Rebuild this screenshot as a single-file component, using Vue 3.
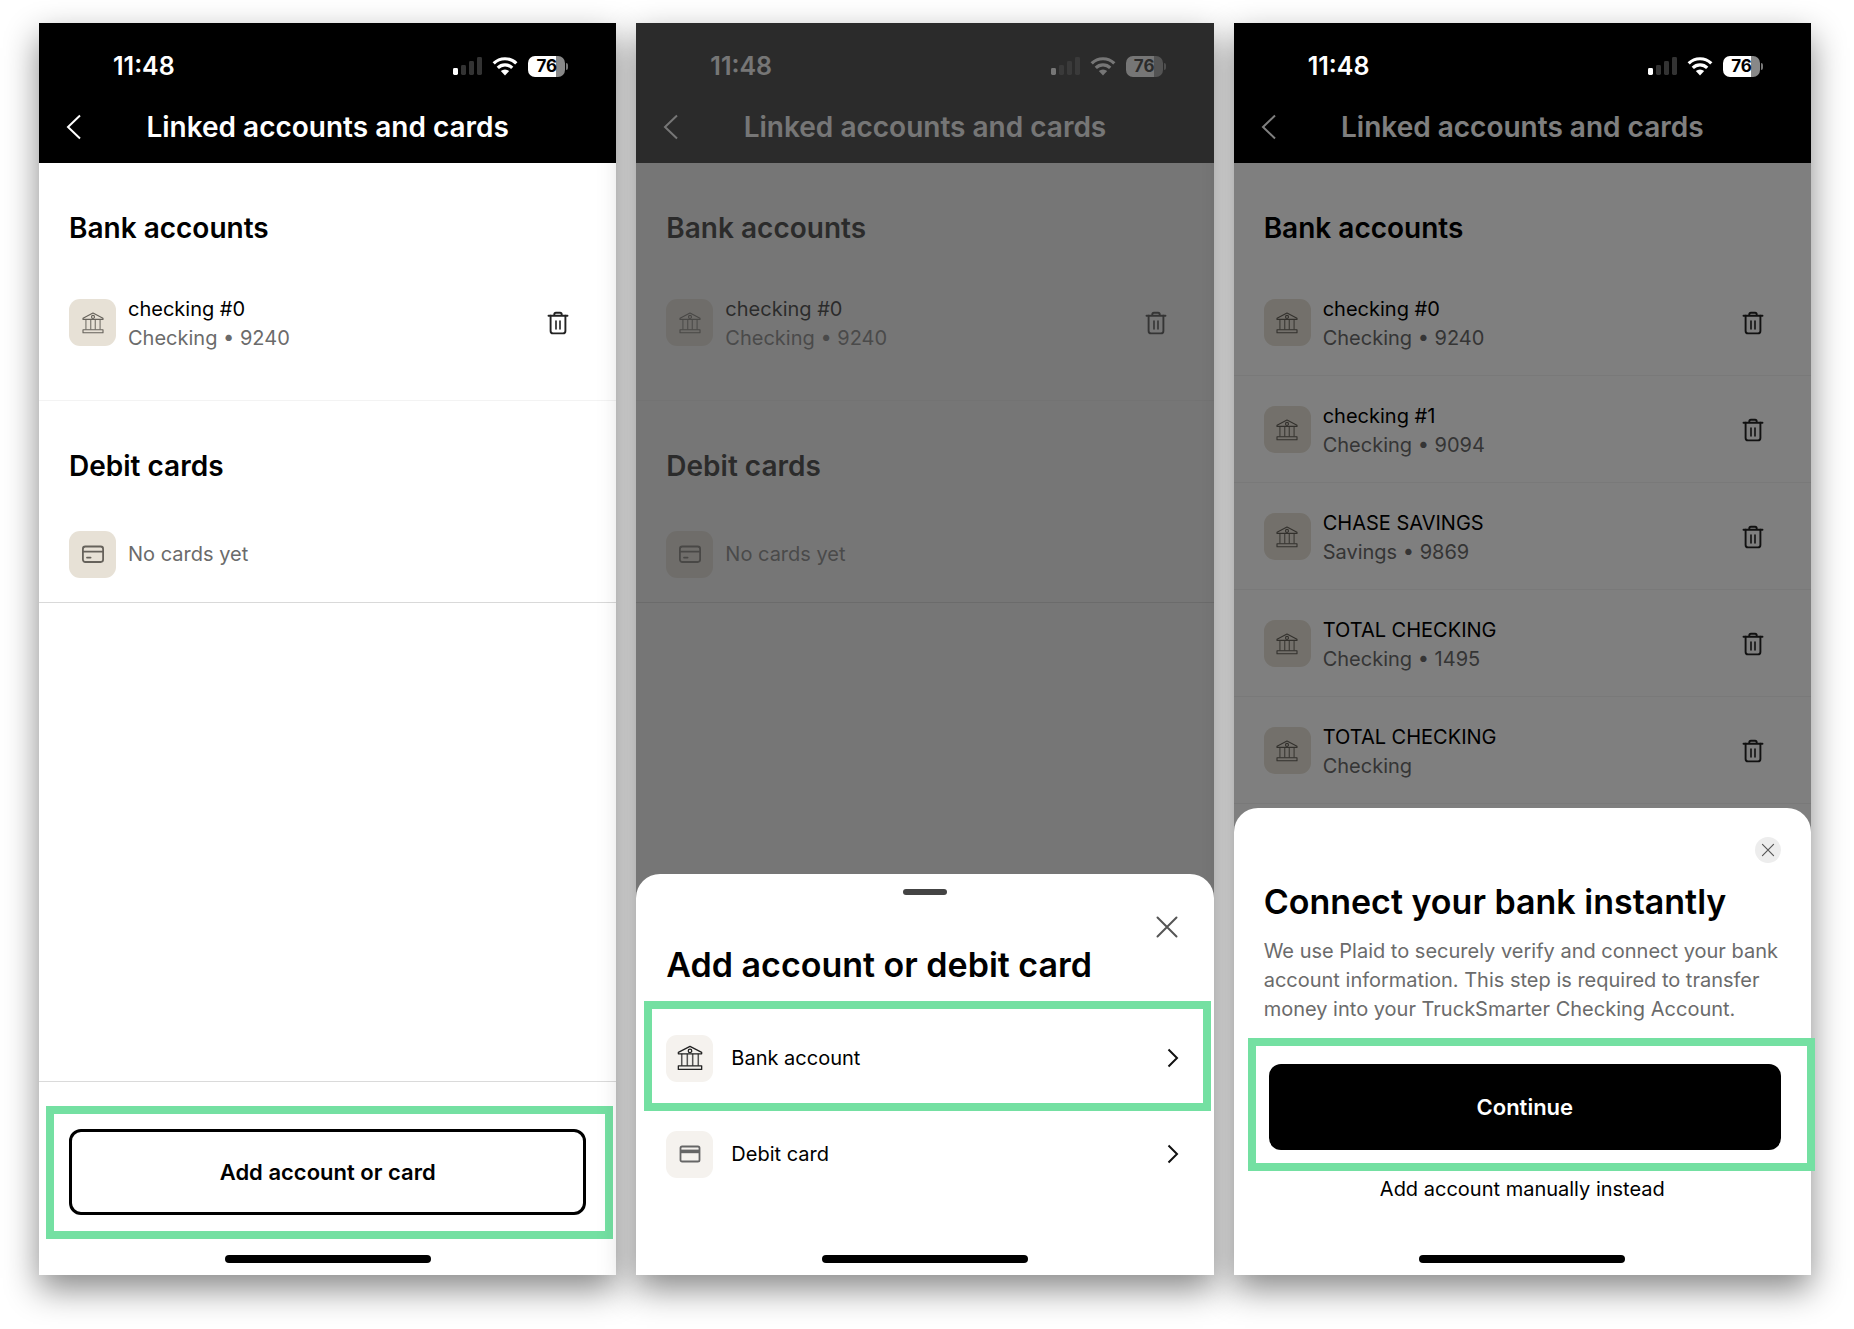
<script setup>
const checking0 = { name: 'checking #0', detail: 'Checking • 9240' }

const phones = [
  { id: 'list', accounts: [checking0], cards: true, sheet: null },
  { id: 'add', accounts: [checking0], cards: true, sheet: 'add' },
  {
    id: 'connect',
    accounts: [
      checking0,
      { name: 'checking #1', detail: 'Checking • 9094' },
      { name: 'CHASE SAVINGS', detail: 'Savings • 9869' },
      { name: 'TOTAL CHECKING', detail: 'Checking • 1495' },
      { name: 'TOTAL CHECKING', detail: 'Checking' },
    ],
    cards: false,
    sheet: 'connect',
  },
]
</script>

<template>
  <svg class="symbols" aria-hidden="true">
    <symbol id="i-bank" viewBox="0 0 24 24">
      <g fill="none" stroke="currentColor" stroke-linejoin="round">
        <path d="M2 8.400V7.200L12 2l10 5.200v1.200z" stroke-width="1.100" />
        <circle cx="12" cy="5.900" r="1.500" stroke-width="1.100" />
        <path d="M4.900 8.400v10.200M9.700 8.400v10.200M14.300 8.400v10.200M19.100 8.400v10.200" stroke-width="1.300" stroke-opacity="0.75" />
        <path d="M2 18.700h20v3.100H2z" stroke-width="1.100" />
      </g>
    </symbol>
    <symbol id="i-trash" viewBox="0 0 24 24">
      <g fill="none" stroke="currentColor" stroke-width="1.900" stroke-linecap="round" stroke-linejoin="round">
        <path d="M2.500 4.800h19M8.300 4.600V3.400q0-1.600 1.600-1.600h4.200q1.600 0 1.600 1.600V4.600" />
        <path d="M4.600 4.800v15.200q0 2.400 2.400 2.400h10q2.400 0 2.400-2.400V4.800" />
        <path d="M10 10v8M14 10v8" stroke-width="1.600" />
      </g>
    </symbol>
    <symbol id="i-card" viewBox="0 0 24 24">
      <g fill="none" stroke="currentColor" stroke-width="1.800" stroke-linecap="round">
        <rect x="1.900" y="3.500" width="20.200" height="15.500" rx="2.400" />
        <path d="M2 8.600h20M6 14.600h3.600" />
      </g>
    </symbol>
    <symbol id="i-card-solid" viewBox="0 0 24 24">
      <rect x="2.500" y="4.500" width="19" height="15" rx="1.600" fill="none" stroke="currentColor" stroke-width="1.800" />
      <path d="M2.500 7.600h19v3.600h-19z" fill="currentColor" />
    </symbol>
    <symbol id="i-close" viewBox="0 0 24 24">
      <path d="M2.500 2.500l19 19M21.500 2.500l-19 19" fill="none" stroke="currentColor" stroke-width="2" stroke-linecap="round" />
    </symbol>
    <symbol id="i-signal" viewBox="0 0 30 20">
      <rect x="0" y="12" width="5" height="7" rx="1.400" fill="#fff" />
      <rect x="8" y="9" width="5" height="10" rx="1.400" fill="#333" />
      <rect x="16" y="5" width="5" height="14" rx="1.400" fill="#333" />
      <rect x="24" y="1" width="5" height="18" rx="1.400" fill="#333" />
    </symbol>
    <symbol id="i-wifi" viewBox="0 0 26 20">
      <g fill="none" stroke="#fff" stroke-width="3.200">
        <path d="M1.700 7.400a16 16 0 0 1 22.600 0" />
        <path d="M5.800 11.800a10.200 10.200 0 0 1 14.400 0" />
      </g>
      <path d="M13 19.400l-4.200-4.300a6 6 0 0 1 8.400 0z" fill="#fff" />
    </symbol>
  </svg>

  <main class="board">
    <article v-for="phone in phones" :key="phone.id" class="phone">
      <header class="header">
        <div class="status" :class="{ lifted: phone.sheet === 'connect' }">
          <span class="time">11:48</span>
          <span class="indicators">
            <svg class="signal"><use href="#i-signal" /></svg>
            <svg class="wifi"><use href="#i-wifi" /></svg>
            <span class="battery">76</span>
          </span>
        </div>
        <div class="nav">
          <button class="back" aria-label="Back">
            <svg viewBox="0 0 16 26"><path d="M14 1.500L2 13l12 11.500" /></svg>
          </button>
          <h1>Linked accounts and cards</h1>
        </div>
      </header>

      <section class="section" :class="{ ruled: phone.cards }">
        <h2>Bank accounts</h2>
        <ul>
          <li v-for="(account, i) in phone.accounts" :key="i" class="row">
            <span class="tile"><svg><use href="#i-bank" /></svg></span>
            <div class="names">
              <p>{{ account.name }}</p>
              <p class="muted">{{ account.detail }}</p>
            </div>
            <button class="trash" :aria-label="`Remove ${account.name}`">
              <svg><use href="#i-trash" /></svg>
            </button>
          </li>
        </ul>
      </section>

      <section v-if="phone.cards" class="section cards">
        <h2>Debit cards</h2>
        <div class="row">
          <span class="tile"><svg><use href="#i-card" /></svg></span>
          <p class="muted">No cards yet</p>
        </div>
      </section>

      <footer v-if="!phone.sheet" class="footer">
        <div class="marked">
          <button class="cta outline">Add account or card</button>
          <span class="highlight around-add"></span>
        </div>
        <div class="home-bar"></div>
      </footer>

      <div v-if="phone.sheet === 'add'" class="backdrop grey">
        <div class="sheet" role="dialog" aria-labelledby="add-title">
          <div class="handle"></div>
          <button class="close" aria-label="Close"><svg><use href="#i-close" /></svg></button>
          <h2 id="add-title">Add account or debit card</h2>
          <div class="marked">
            <button class="option">
              <span class="tile pale"><svg class="large"><use href="#i-bank" /></svg></span>
              Bank account
              <svg class="chevron" viewBox="0 0 12 20"><path d="M1.500 1.500L10 10l-8.500 8.500" /></svg>
            </button>
            <span class="highlight around-option"></span>
          </div>
          <button class="option">
            <span class="tile pale soft"><svg><use href="#i-card-solid" /></svg></span>
            Debit card
            <svg class="chevron" viewBox="0 0 12 20"><path d="M1.500 1.500L10 10l-8.500 8.500" /></svg>
          </button>
          <div class="home-bar"></div>
        </div>
      </div>

      <div v-if="phone.sheet === 'connect'" class="backdrop dark">
        <div class="sheet connect" role="dialog" aria-labelledby="connect-title">
          <button class="close round" aria-label="Close"><svg><use href="#i-close" /></svg></button>
          <h2 id="connect-title">Connect your bank instantly</h2>
          <p class="copy">
            We use Plaid to securely verify and connect your bank account information. This step is
            required to transfer money into your TruckSmarter Checking Account.
          </p>
          <div class="marked">
            <button class="cta solid">Continue</button>
            <span class="highlight around-continue"></span>
          </div>
          <a class="manual" href="#manual">Add account manually instead</a>
          <div class="home-bar"></div>
        </div>
      </div>
    </article>
  </main>
</template>

<style>
body {
  margin: 0;
  background: #fff;
}
</style>

<style scoped>
.symbols {
  position: absolute;
  width: 0;
  height: 0;
}

.board {
  display: flex;
  gap: 20px;
  min-height: 100vh;
  box-sizing: border-box;
  padding: 23px 43px 54px 39px;
  font-family: Inter, "Liberation Sans", sans-serif;
  font-size: 20px;
  line-height: 29px;
  color: #000;
}

h1,
h2,
p,
ul {
  margin: 0;
  padding: 0;
}

button {
  font: inherit;
  color: inherit;
  background: none;
  border: 0;
  padding: 0;
}

svg {
  display: block;
}

.phone {
  position: relative;
  flex: 1;
  display: flex;
  flex-direction: column;
  background: #fff;
  box-shadow: 0 14px 32px rgba(0, 0, 0, 0.47);
}

/* Header */
.header {
  background: #000;
  color: #fff;
}

.status {
  position: relative;
  display: flex;
  justify-content: space-between;
  box-sizing: border-box;
  height: 68px;
  padding: 32px 48px 0 74px;
}

.lifted {
  z-index: 2;
}

.time {
  font-size: 25px;
  line-height: 23px;
  font-weight: 600;
}

.indicators {
  display: flex;
  align-items: center;
  height: 22px;
}

.signal {
  width: 30px;
  height: 20px;
  margin-right: 9px;
}

.wifi {
  width: 26px;
  height: 20px;
  margin-right: 10px;
}

.battery {
  position: relative;
  width: 37px;
  height: 21px;
  border-radius: 7px;
  background: linear-gradient(90deg, #fff 76%, #888 76%);
  color: #000;
  font-size: 17px;
  line-height: 21px;
  font-weight: 700;
  text-align: center;
  margin-right: 3px;
}

.battery::after {
  content: "";
  position: absolute;
  left: 38px;
  top: 7px;
  width: 2px;
  height: 7px;
  border-radius: 0 2px 2px 0;
  background: #777;
}

.nav {
  display: grid;
  grid-template-columns: 56px 1fr 56px;
  align-items: center;
  height: 72px;
}

.nav h1 {
  font-size: 28px;
  line-height: 34px;
  font-weight: 600;
  text-align: center;
  white-space: nowrap;
}

.back {
  justify-self: start;
  margin-left: 27px;
}

.back svg {
  width: 16px;
  height: 26px;
  fill: none;
  stroke: #fff;
  stroke-width: 2;
}

/* Lists */
.section {
  padding-top: 48px;
}

.section h2 {
  padding: 0 30px;
  margin-bottom: 24px;
  font-size: 28px;
  line-height: 34px;
  font-weight: 600;
}

.section ul {
  list-style: none;
}

.ruled {
  padding-bottom: 24px;
  border-bottom: 1px solid #f3f3f3;
}

.row {
  display: flex;
  align-items: center;
  gap: 12px;
  box-sizing: border-box;
  height: 107px;
  padding: 0 46px 0 30px;
}

.names {
  padding-top: 2px;
}

.section:not(.ruled) li {
  box-shadow: inset 0 -1px #f3f3f3;
}

.cards .row {
  height: 96px;
  border-bottom: 1px solid #d9d9d9;
}

.tile {
  display: grid;
  place-items: center;
  flex: none;
  width: 47px;
  height: 47px;
  border-radius: 11px;
  background: #e7e1d6;
  color: #66625b;
}

.tile svg {
  width: 24px;
  height: 24px;
}

.tile .large {
  width: 28px;
  height: 28px;
}

.pale {
  background: #f5f2ee;
  color: #222;
}

.soft {
  color: #666;
}

.muted {
  color: #6b6b6b;
}

.trash {
  margin-left: auto;
  color: #222;
}

.trash svg {
  width: 24px;
  height: 24px;
}

/* Bottom area */
.footer {
  margin-top: auto;
  padding-top: 47px;
  border-top: 1px solid #dadada;
}

.marked {
  position: relative;
}

.cta {
  display: block;
  box-sizing: border-box;
  height: 86px;
  border-radius: 12px;
  font-size: 22px;
  font-weight: 600;
}

.outline {
  width: calc(100% - 60px);
  margin: 0 30px;
  border: 3px solid #000;
}

.solid {
  width: calc(100% - 65px);
  margin: 0 30px 0 35px;
  background: #000;
  color: #fff;
}

.highlight {
  position: absolute;
  border: 8px solid #74e0a2;
  pointer-events: none;
}

.around-add {
  inset: -23px 3px -24px 7px;
}

.around-option {
  inset: -9px 3px -5px 8px;
}

.around-continue {
  inset: -26px -4px -21px 14px;
}

.home-bar {
  width: 206px;
  height: 8px;
  margin: 40px auto 12px;
  border-radius: 4px;
  background: #000;
}

/* Sheets */
.backdrop {
  position: absolute;
  inset: 0;
  z-index: 1;
  display: flex;
  flex-direction: column;
  justify-content: flex-end;
}

.grey {
  background: rgba(61, 61, 61, 0.706);
}

.dark {
  background: rgba(0, 0, 0, 0.5);
}

.sheet {
  background: #fff;
  border-radius: 24px 24px 0 0;
}

.sheet h2 {
  padding: 0 30px;
  font-size: 34px;
  line-height: 40px;
  font-weight: 600;
  white-space: nowrap;
}

.handle {
  width: 44px;
  height: 6px;
  margin: 15px auto 20px;
  border-radius: 3px;
  background: #444;
}

.close {
  display: grid;
  place-items: center;
  width: 24px;
  height: 24px;
  margin: 0 35px 6px auto;
  color: #555;
}

.close svg {
  width: 24px;
  height: 24px;
}

.round {
  width: 26px;
  height: 26px;
  margin: 29px 30px 19px auto;
  border-radius: 50%;
  background: #ededed;
}

.round svg {
  width: 14px;
  height: 14px;
}

#add-title {
  margin-bottom: 25px;
}

.option {
  display: flex;
  align-items: center;
  gap: 18px;
  width: 100%;
  height: 96px;
  padding: 0 35px 0 30px;
}

.chevron {
  width: 12px;
  height: 20px;
  margin-left: auto;
  fill: none;
  stroke: #111;
  stroke-width: 2;
}

.sheet .home-bar {
  margin-top: 53px;
}

.copy {
  margin: 15px 30px 40px;
  color: #6b6b6b;
}

.manual {
  display: block;
  margin-top: 25px;
  text-align: center;
  color: inherit;
  text-decoration: none;
}

.connect .home-bar {
  margin-top: 51px;
}
</style>
